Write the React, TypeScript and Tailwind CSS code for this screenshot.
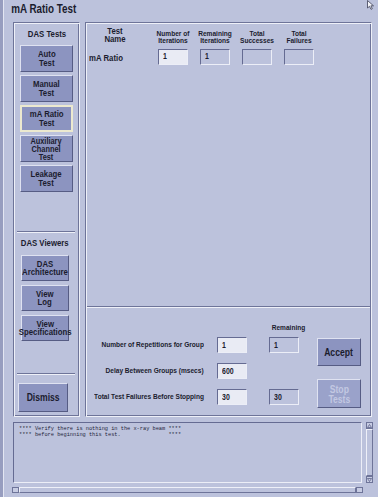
import type { ReactNode } from "react"

const font = { fontFamily: '"Liberation Sans", Arial, sans-serif' }
// the screen font is a narrow helvetica, so squeeze the text horizontally
const nar = "scale-x-[0.82] whitespace-nowrap"

function Btn({ w, h, children, active = false, disabled = false, className = "" }: { w: string; h: string; children: ReactNode; active?: boolean; disabled?: boolean; className?: string }) {
    const edge = active
        ? "border-2 border-[#ece9cf]"
        : "border border-t-[#dfe2f1] border-l-[#dfe2f1] border-b-[#565c84] border-r-[#565c84]"
    return (
        <div className={`${w} ${h} ${edge} ${disabled ? "bg-[#9aa2ca] text-[#c3c8e2]" : "bg-[#8c94c0] text-[#1b1c2e]"} flex items-center justify-center text-center font-bold text-[9.5px] leading-[8.5px] ${className}`}>
            <div className={`flex flex-col items-center ${nar}`}>{children}</div>
        </div>
    )
}

function Field({ value = "", editable = false, className = "" }: { value?: string; editable?: boolean; className?: string }) {
    return (
        <div className={`w-[30px] h-[16px] border border-t-[#656b92] border-l-[#656b92] border-b-[#eceef7] border-r-[#eceef7] ${editable ? "bg-[#e9ebf4]" : "bg-[#bcc2dc]"} flex items-center pl-[4px] text-[8.5px] font-bold text-[#1b1c2e] ${className}`}>
            <span className={`${nar} origin-left`}>{value}</span>
        </div>
    )
}

function Sep({ className = "" }: { className?: string }) {
    return <div className={`h-[2px] border-t border-t-[#6e7499] border-b border-b-[#eef0f8] ${className}`} />
}

const groove = "border border-t-[#6e7499] border-l-[#6e7499] border-b-[#eef0f8] border-r-[#eef0f8] shadow-[inset_1px_1px_0_#eef0f8,inset_-1px_-1px_0_#6e7499]"

function Row({ label, value, remaining }: { label: string; value: string; remaining?: string }) {
    return (
        <div className="flex items-center h-[16px]">
            <div className="w-[117px] flex justify-end">
                <span className={`text-[8px] font-bold ${nar} origin-right`}>{label}</span>
            </div>
            <Field value={value} editable className="ml-[13px]" />
            {remaining !== undefined && <Field value={remaining} className="ml-[22px]" />}
        </div>
    )
}

function Head({ children }: { children: ReactNode }) {
    return <div className={`text-center text-[8px] font-bold leading-[7px] ${nar}`}>{children}</div>
}

export default function App() {
    return (
        <div style={font} className="relative w-[378px] h-[497px] bg-[#bcc2dc] border-l-[3px] border-l-[#979dbf] flex flex-col text-[#1b1c2e] overflow-hidden">
            <div className="absolute left-0 top-0 bottom-0 w-px bg-[#e3e6f2]" />
            <svg className="absolute left-[364px] top-0" width="8" height="10" viewBox="0 0 8 10">
                <path d="M0.5 0.5 L0.5 8 L2.5 6.3 L4 9.3 L5.3 8.7 L3.9 5.8 L6.5 5.8 Z" fill="#f4f5fa" stroke="#3c3f55" strokeWidth="0.8" />
            </svg>

            <div className={`h-[22px] pl-[10px] pt-[3px] text-[12px] font-bold leading-[13px] ${nar} origin-left`}>mA Ratio Test</div>

            <div className="flex h-[395px] pl-[10px]">
                {/* left panel */}
                <div className={`w-[67px] h-full ${groove} flex flex-col pl-[1px]`}>
                    <div className={`pt-[6px] h-[22px] text-center text-[9.5px] font-bold leading-[10px] ${nar}`}>DAS Tests</div>
                    <div className="flex flex-col gap-[3px] ml-[5px]">
                        <Btn w="w-[53px]" h="h-[27px]"><span>Auto</span><span>Test</span></Btn>
                        <Btn w="w-[53px]" h="h-[27px]"><span>Manual</span><span>Test</span></Btn>
                        <Btn w="w-[53px]" h="h-[27px]" active><span>mA Ratio</span><span>Test</span></Btn>
                        <Btn w="w-[53px]" h="h-[27px]" className="leading-[8px] text-[9px]"><span>Auxiliary</span><span>Channel</span><span>Test</span></Btn>
                        <Btn w="w-[53px]" h="h-[27px]"><span>Leakage</span><span>Test</span></Btn>
                    </div>
                    <Sep className="mt-[39px] ml-[2px] w-[58px]" />
                    <div className={`mt-[5px] h-[10px] text-center text-[9.5px] font-bold leading-[10px] pr-[6px] ${nar}`}>DAS Viewers</div>
                    <div className="flex flex-col gap-[4px] ml-[6px] mt-[7px]">
                        <Btn w="w-[48px]" h="h-[26px]"><span>DAS</span><span>Architecture</span></Btn>
                        <Btn w="w-[48px]" h="h-[26px]"><span>View</span><span>Log</span></Btn>
                        <Btn w="w-[48px]" h="h-[26px]"><span>View</span><span>Specifications</span></Btn>
                    </div>
                    <Sep className="mt-[32px] ml-[2px] w-[58px]" />
                    <Btn w="w-[50px]" h="h-[29px]" className="ml-[3px] mt-[8px] text-[10.5px]">Dismiss</Btn>
                </div>

                {/* right panel */}
                <div className={`ml-[5px] w-[287px] h-full ${groove} flex flex-col`}>
                    <div className="flex-1 pt-[4px] pl-[1px]">
                        <div className="grid grid-cols-[65px_42px_42px_42px_42px] items-end">
                            <div className={`ml-[2px] w-[52px] text-center text-[9.5px] font-bold leading-[8px] pb-[1px] ${nar}`}>Test<br />Name</div>
                            <Head>Number of<br />Iterations</Head>
                            <Head>Remaining<br />Iterations</Head>
                            <Head>Total<br />Successes</Head>
                            <Head>Total<br />Failures</Head>
                        </div>
                        <div className="grid grid-cols-[65px_42px_42px_42px_42px] items-center mt-[4px]">
                            <div className={`ml-[2px] pt-[3px] text-[9.5px] font-bold ${nar} origin-left`}>mA Ratio</div>
                            <div className="flex justify-center"><Field value="1" editable /></div>
                            <div className="flex justify-center"><Field value="1" /></div>
                            <div className="flex justify-center"><Field /></div>
                            <div className="flex justify-center"><Field /></div>
                        </div>
                    </div>
                    <Sep className="mx-[1px]" />
                    <div className="h-[108px] flex pl-[1px] pt-[16px]">
                        <div className="flex flex-col">
                            <div className="flex h-[8px] items-center">
                                <span className="w-[182px]" />
                                <span className={`w-[30px] text-center text-[8px] font-bold ${nar}`}>Remaining</span>
                            </div>
                            <div className="flex flex-col gap-[10px] mt-[5px]">
                                <Row label="Number of Repetitions for Group" value="1" remaining="1" />
                                <Row label="Delay Between Groups (msecs)" value="600" />
                                <Row label="Total Test Failures Before Stopping" value="30" remaining="30" />
                            </div>
                        </div>
                        <div className="flex flex-col ml-[18px] pt-[14px]">
                            <Btn w="w-[44px]" h="h-[28px]" className="text-[10.5px]">Accept</Btn>
                            <Btn w="w-[44px]" h="h-[29px]" disabled className="mt-[13px] text-[10.5px] leading-[10px]"><span>Stop</span><span>Tests</span></Btn>
                        </div>
                    </div>
                </div>
            </div>

            {/* log area */}
            <div className="flex mt-[5px] pl-[10px]">
                <div className="w-[349px] h-[61px] border border-t-[#656b92] border-l-[#656b92] border-b-[#eceef7] border-r-[#eceef7] pl-[5px] pt-[3px]">
                    <pre className="text-[5.3px] leading-[6px] text-[#23253a]" style={{ fontFamily: '"Liberation Mono", "DejaVu Sans Mono", monospace' }}>
{"**** Verify there is nothing in the x-ray beam ****\n**** before beginning this test.               ****"}
                    </pre>
                </div>
                <div className="ml-[4px] w-[7px] h-[61px] flex flex-col">
                    <div className="h-[7px] border border-[#6e7499] bg-[#c7cce3] flex items-center justify-center">
                        <svg width="5" height="4" viewBox="0 0 5 4"><path d="M2.5 0.5 L4.5 3.5 L0.5 3.5 Z" fill="none" stroke="#4f557c" strokeWidth="0.7" /></svg>
                    </div>
                    <div className="flex-1 border border-t-[#eef0f8] border-l-[#eef0f8] border-b-[#6e7499] border-r-[#6e7499] bg-[#bcc2dc]" />
                    <div className="h-[7px] border border-[#6e7499] bg-[#c7cce3] flex items-center justify-center">
                        <svg width="5" height="4" viewBox="0 0 5 4"><path d="M0.5 0.5 L4.5 0.5 L2.5 3.5 Z" fill="none" stroke="#4f557c" strokeWidth="0.7" /></svg>
                    </div>
                </div>
            </div>
            <div className="flex mt-[4px] ml-[9px] w-[351px] h-[6px]">
                <div className="w-[7px] h-full border border-[#6e7499] bg-[#c7cce3]" />
                <div className="flex-1 border border-t-[#eef0f8] border-l-[#eef0f8] border-b-[#6e7499] border-r-[#6e7499]" />
                <div className="w-[7px] h-full border border-[#6e7499] bg-[#c7cce3]" />
            </div>
        </div>
    )
}
